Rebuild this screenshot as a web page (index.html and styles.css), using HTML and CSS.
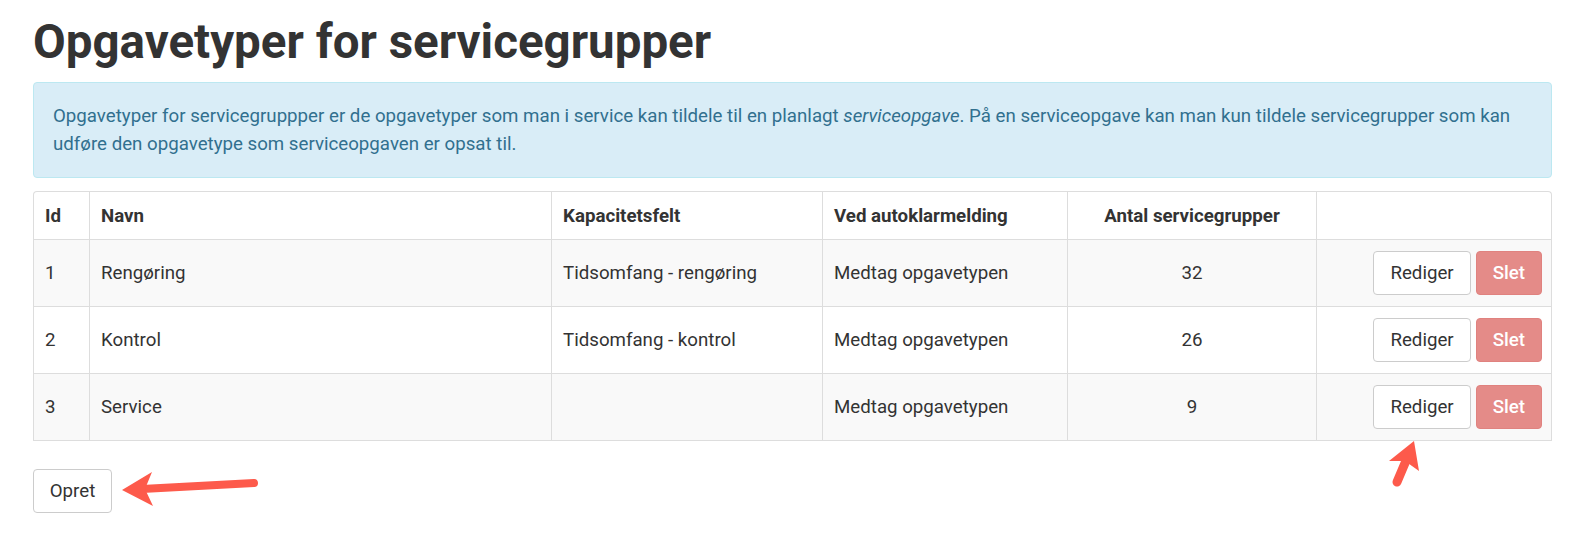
FILE: index.html
```html
<!DOCTYPE html>
<html lang="da">
<head>
    <meta charset="UTF-8">
    <meta name="viewport" content="width=device-width, initial-scale=1.0">
    <title>Opgavetyper for servicegrupper</title>
    <link rel="stylesheet" href="styles.css">
</head>
<body>
    <div class="container">
        <h1>Opgavetyper for servicegrupper</h1>

        <div class="alert-info">
            Opgavetyper for servicegruppper er de opgavetyper som man i service kan tildele til en planlagt <em>serviceopgave</em>. På en serviceopgave kan man kun tildele servicegrupper som kan udføre den opgavetype som serviceopgaven er opsat til.
        </div>

        <table class="task-table">
            <colgroup>
                <col class="col-id">
                <col class="col-name">
                <col class="col-cap">
                <col class="col-auto">
                <col class="col-count">
                <col class="col-actions">
            </colgroup>
            <thead>
                <tr>
                    <th>Id</th>
                    <th>Navn</th>
                    <th>Kapacitetsfelt</th>
                    <th>Ved autoklarmelding</th>
                    <th class="center">Antal servicegrupper</th>
                    <th></th>
                </tr>
            </thead>
            <tbody>
                <tr>
                    <td>1</td>
                    <td>Rengøring</td>
                    <td>Tidsomfang - rengøring</td>
                    <td>Medtag opgavetypen</td>
                    <td class="center">32</td>
                    <td class="actions">
                        <div class="btn-group">
                            <button class="btn">Rediger</button>
                            <button class="btn btn-danger">Slet</button>
                        </div>
                    </td>
                </tr>
                <tr>
                    <td>2</td>
                    <td>Kontrol</td>
                    <td>Tidsomfang - kontrol</td>
                    <td>Medtag opgavetypen</td>
                    <td class="center">26</td>
                    <td class="actions">
                        <div class="btn-group">
                            <button class="btn">Rediger</button>
                            <button class="btn btn-danger">Slet</button>
                        </div>
                    </td>
                </tr>
                <tr>
                    <td>3</td>
                    <td>Service</td>
                    <td></td>
                    <td>Medtag opgavetypen</td>
                    <td class="center">9</td>
                    <td class="actions">
                        <div class="btn-group">
                            <button class="btn">Rediger</button>
                            <button class="btn btn-danger">Slet</button>
                        </div>
                    </td>
                </tr>
            </tbody>
        </table>

        <button class="btn btn-create">Opret</button>
    </div>

    <!-- annotation arrows drawn on top of the screenshot -->
    <svg class="annotations" width="1573" height="536" viewBox="0 0 1573 536">
        <line x1="142" y1="489" x2="254" y2="483" stroke="#fd5a4b" stroke-width="8" stroke-linecap="round"/>
        <polygon points="122,490 152,472 145,489 153,506" fill="#fd5a4b"/>
        <line x1="1397" y1="482" x2="1408" y2="456" stroke="#fd5a4b" stroke-width="9" stroke-linecap="round"/>
        <polygon points="1414,441 1419,471 1405,461 1389,461" fill="#fd5a4b"/>
    </svg>
</body>
</html>
```

FILE: styles.css
```css
body {
    margin: 0;
    font-family: Roboto, "Liberation Sans", sans-serif;
    font-size: 18.7px;
    color: #333;
    background: #fff;
}
.container {
    padding: 0 21px 0 33px;
}
h1 {
    margin: 14px 0 12px;
    font-size: 47.5px;
    font-weight: 700;
    line-height: 56px;
    color: #333;
}
.alert-info {
    padding: 19px;
    margin-bottom: 13px;
    background-color: #d9edf7;
    border: 1px solid #bce8f1;
    border-radius: 4px;
    color: #31708f;
    line-height: 28px;
}
.task-table {
    width: 100%;
    border-collapse: separate;
    border-spacing: 0;
    table-layout: fixed;
    border: 1px solid #ddd;
    border-bottom: none;
    border-radius: 4px 4px 0 0;
}
.col-id { width: 55px; }
.col-name { width: 462px; }
.col-cap { width: 271px; }
.col-auto { width: 245px; }
.col-count { width: 249px; }
.task-table th,
.task-table td {
    padding: 0 11px;
    text-align: left;
    border-bottom: 1px solid #ddd;
    border-left: 1px solid #ddd;
}
.task-table th:first-child,
.task-table td:first-child {
    border-left: none;
}
.task-table th {
    height: 47px;
    font-weight: 700;
}
.task-table td {
    height: 66px;
}
.task-table tbody tr:nth-child(odd) {
    background-color: #f9f9f9;
}
.task-table .center {
    text-align: center;
}
.task-table .actions {
    padding-right: 9px;
}
.btn-group {
    display: flex;
    justify-content: flex-end;
    gap: 5px;
}
.btn {
    height: 44px;
    padding: 0 16px;
    font-family: inherit;
    font-size: 18.7px;
    color: #333;
    background: #fff;
    border: 1px solid #ccc;
    border-radius: 4px;
    cursor: pointer;
}
.btn-danger {
    padding: 0 16px;
    color: #fff;
    font-weight: 500;
    background-color: #e48b88;
    border-color: #e0827f;
}
.btn-create {
    margin-top: 28px;
    width: 79px;
    padding: 0;
}
.annotations {
    position: absolute;
    top: 0;
    left: 0;
    pointer-events: none;
}
```
